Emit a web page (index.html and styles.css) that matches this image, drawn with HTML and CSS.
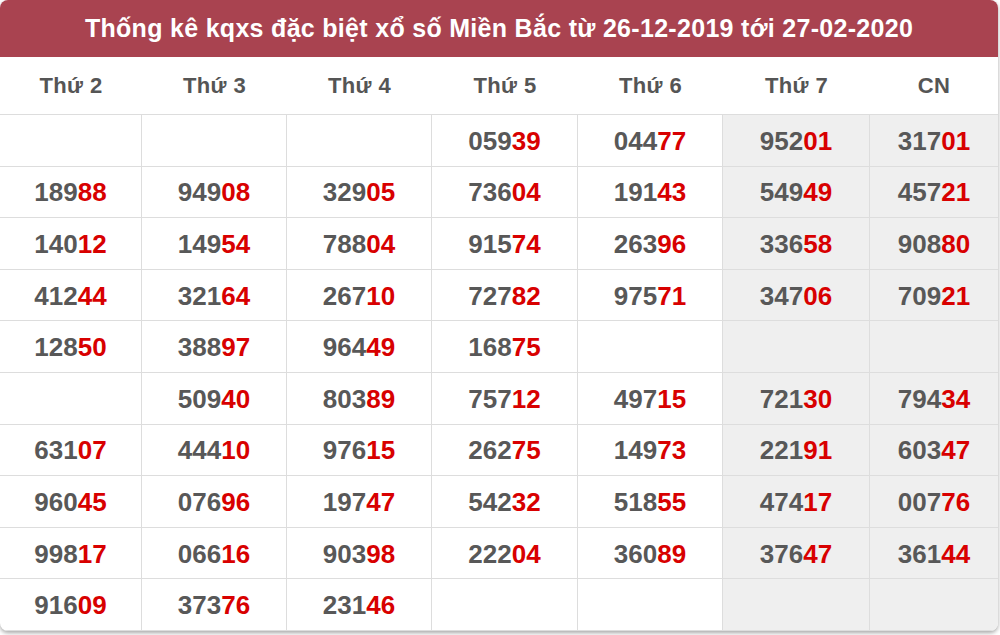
FILE: index.html
```html
<!DOCTYPE html>
<html lang="vi">
<head>
<meta charset="utf-8">
<title>Thống kê</title>
<link rel="stylesheet" href="styles.css">
</head>
<body>
<div class="card">
  <div class="title">Thống kê kqxs đặc biệt xổ số Miền Bắc từ 26-12-2019 tới 27-02-2020</div>
  <div class="grid">
    <div class="th">Thứ 2</div><div class="th">Thứ 3</div><div class="th">Thứ 4</div><div class="th">Thứ 5</div><div class="th">Thứ 6</div><div class="th">Thứ 7</div><div class="th">CN</div>

    <div class="td"></div><div class="td"></div><div class="td"></div>
    <div class="td">059<b>39</b></div><div class="td">044<b>77</b></div><div class="td we">952<b>01</b></div><div class="td we">317<b>01</b></div>

    <div class="td">189<b>88</b></div><div class="td">949<b>08</b></div><div class="td">329<b>05</b></div>
    <div class="td">736<b>04</b></div><div class="td">191<b>43</b></div><div class="td we">549<b>49</b></div><div class="td we">457<b>21</b></div>

    <div class="td">140<b>12</b></div><div class="td">149<b>54</b></div><div class="td">788<b>04</b></div>
    <div class="td">915<b>74</b></div><div class="td">263<b>96</b></div><div class="td we">336<b>58</b></div><div class="td we">908<b>80</b></div>

    <div class="td">412<b>44</b></div><div class="td">321<b>64</b></div><div class="td">267<b>10</b></div>
    <div class="td">727<b>82</b></div><div class="td">975<b>71</b></div><div class="td we">347<b>06</b></div><div class="td we">709<b>21</b></div>

    <div class="td">128<b>50</b></div><div class="td">388<b>97</b></div><div class="td">964<b>49</b></div>
    <div class="td">168<b>75</b></div><div class="td"></div><div class="td we"></div><div class="td we"></div>

    <div class="td"></div><div class="td">509<b>40</b></div><div class="td">803<b>89</b></div>
    <div class="td">757<b>12</b></div><div class="td">497<b>15</b></div><div class="td we">721<b>30</b></div><div class="td we">794<b>34</b></div>

    <div class="td">631<b>07</b></div><div class="td">444<b>10</b></div><div class="td">976<b>15</b></div>
    <div class="td">262<b>75</b></div><div class="td">149<b>73</b></div><div class="td we">221<b>91</b></div><div class="td we">603<b>47</b></div>

    <div class="td">960<b>45</b></div><div class="td">076<b>96</b></div><div class="td">197<b>47</b></div>
    <div class="td">542<b>32</b></div><div class="td">518<b>55</b></div><div class="td we">474<b>17</b></div><div class="td we">007<b>76</b></div>

    <div class="td">998<b>17</b></div><div class="td">066<b>16</b></div><div class="td">903<b>98</b></div>
    <div class="td">222<b>04</b></div><div class="td">360<b>89</b></div><div class="td we">376<b>47</b></div><div class="td we">361<b>44</b></div>

    <div class="td">916<b>09</b></div><div class="td">373<b>76</b></div><div class="td">231<b>46</b></div>
    <div class="td"></div><div class="td"></div><div class="td we"></div><div class="td we"></div>
  </div>
</div>
</body>
</html>
```

FILE: styles.css
```css
html, body {
  margin: 0;
  padding: 0;
  background: #ffffff;
}
body {
  width: 1000px;
  height: 635px;
  overflow: hidden;
  font-family: "Liberation Sans", Arial, sans-serif;
}
.card {
  width: 998px;
  height: 631px;
  border-radius: 8px;
  overflow: hidden;
  background: #ffffff;
  box-shadow: 0 2px 4px rgba(0, 0, 0, 0.35);
  display: flex;
  flex-direction: column;
}
.title {
  height: 57px;
  flex: none;
  background: #a94350;
  color: #ffffff;
  font-weight: bold;
  font-size: 25px;
  letter-spacing: 0.3px;
  display: flex;
  align-items: center;
  justify-content: center;
}
.grid {
  flex: 1;
  display: grid;
  grid-template-columns: 142px 145px 145px 146px 145px 147px 1fr;
  grid-template-rows: 58px repeat(10, 1fr);
}
.th {
  display: flex;
  align-items: center;
  justify-content: center;
  font-weight: bold;
  font-size: 22px;
  letter-spacing: 0.4px;
  color: #555555;
  border-bottom: 1px solid #dddddd;
}
.td {
  display: flex;
  align-items: center;
  justify-content: center;
  padding-top: 2px;
  font-weight: bold;
  font-size: 26px;
  color: #585858;
  border-right: 1px solid #dddddd;
  border-bottom: 1px solid #dddddd;
}
.td:nth-child(7n) {
  border-right: none;
}
.td b {
  color: #d80000;
}
.we {
  background: #efefef;
}
```
